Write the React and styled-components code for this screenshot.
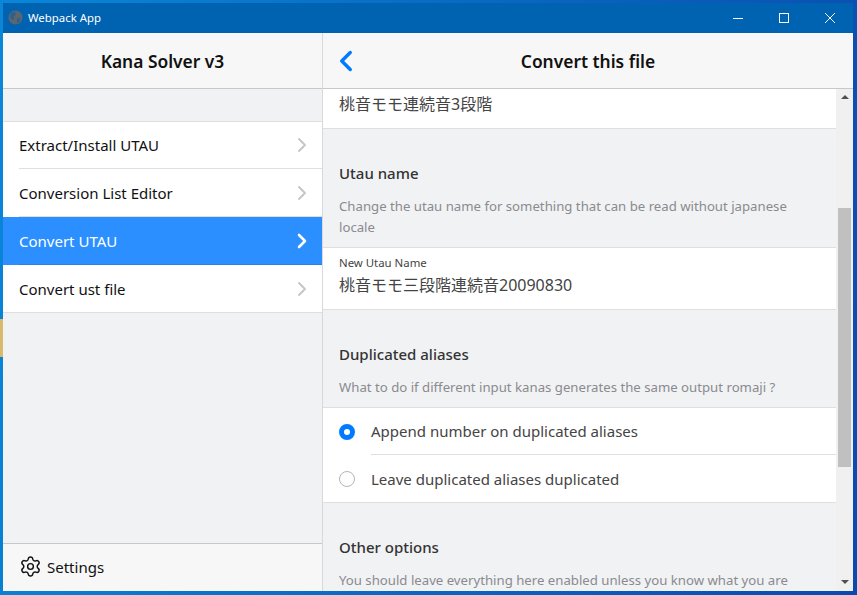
import React from 'react';
import styled, { createGlobalStyle } from 'styled-components';
import { ChevronLeft, ChevronRight, Settings } from 'lucide-react';

const GlobalStyle = createGlobalStyle`
  html, body {
    margin: 0;
    padding: 0;
    overflow: hidden;
  }
  * {
    box-sizing: border-box;
  }
`;

const menuItems = [
  { name: 'Extract/Install UTAU' },
  { name: 'Conversion List Editor' },
  { name: 'Convert UTAU', active: true },
  { name: 'Convert ust file' },
];

const App = () => {
  return (
    <>
      <GlobalStyle />
      <Desktop>
        <Wallpaper />
        <Window>
          <TitleBar>
            <svg width="15" height="15" viewBox="0 0 15 15">
              <circle cx="7.5" cy="7.5" r="7" fill="#5c6670" />
              <path d="M3 2.5 7 2 8 4.5 5.5 6.5 6.5 9 4.5 10 2 7ZM9 8l3.5.5L11 12.5 9 13Z" fill="#2f5f8c" />
            </svg>
            <AppName>Webpack App</AppName>
            <WindowControls>
              <ControlButton>
                <svg width="10" height="10" viewBox="0 0 10 10">
                  <path d="M0 5.5h10" stroke="#fff" fill="none" />
                </svg>
              </ControlButton>
              <ControlButton>
                <svg width="10" height="10" viewBox="0 0 10 10">
                  <rect x=".5" y=".5" width="9" height="9" stroke="#fff" fill="none" />
                </svg>
              </ControlButton>
              <ControlButton>
                <svg width="10" height="10" viewBox="0 0 10 10">
                  <path d="M0 0l10 10M10 0L0 10" stroke="#fff" fill="none" />
                </svg>
              </ControlButton>
            </WindowControls>
          </TitleBar>
          <Panes>
            <Sidebar>
              <NavBar>
                <NavTitle>Kana Solver v3</NavTitle>
              </NavBar>
              <SideList>
                {menuItems.map((item) => (
                  <SideRow key={item.name} $active={item.active}>
                    <SideInner $active={item.active}>
                      <span>{item.name}</span>
                      <ChevronRight size={24} strokeWidth={item.active ? 2.6 : 1.8} />
                    </SideInner>
                  </SideRow>
                ))}
              </SideList>
              <SideFooter>
                <Settings size={23} strokeWidth={1.5} />
                <span>Settings</span>
              </SideFooter>
            </Sidebar>
            <Main>
              <NavBar>
                <BackButton>
                  <ChevronLeft size={34} strokeWidth={2.4} />
                </BackButton>
                <NavTitle>Convert this file</NavTitle>
              </NavBar>
              <ScrollArea>
                <Content>
                  <TopRow>桃音モモ連続音3段階</TopRow>
                  <SectionHead>Utau name</SectionHead>
                  <SectionText>Change the utau name for something that can be read without japanese locale</SectionText>
                  <FieldRow>
                    <FieldLabel>New Utau Name</FieldLabel>
                    <FieldValue>桃音モモ三段階連続音20090830</FieldValue>
                  </FieldRow>
                  <SectionHead>Duplicated aliases</SectionHead>
                  <SectionText>What to do if different input kanas generates the same output romaji ?</SectionText>
                  <RadioList>
                    <RadioRow>
                      <Radio $checked />
                      <RadioLabel $divided>Append number on duplicated aliases</RadioLabel>
                    </RadioRow>
                    <RadioRow>
                      <Radio />
                      <RadioLabel>Leave duplicated aliases duplicated</RadioLabel>
                    </RadioRow>
                  </RadioList>
                  <SectionHead>Other options</SectionHead>
                  <SectionText>You should leave everything here enabled unless you know what you are</SectionText>
                </Content>
                <Scrollbar>
                  <ArrowUp />
                  <ScrollTrack>
                    <ScrollThumb />
                  </ScrollTrack>
                  <ArrowDown />
                </Scrollbar>
              </ScrollArea>
            </Main>
          </Panes>
        </Window>
      </Desktop>
    </>
  );
};

export default App;

const Desktop = styled.div`
  position: relative;
  width: 857px;
  height: 595px;
  padding: 3px 4px 4px 3px;
  background: linear-gradient(100deg, #0a86d8 0%, #0a6cc4 45%, #0a4aae 100%);
  font-family: 'Noto Sans', 'Noto Sans CJK JP', sans-serif;
  overflow: hidden;
`;

const Wallpaper = styled.div`
  position: absolute;
  left: 0;
  top: 319px;
  width: 3px;
  height: 38px;
  background: #d9b96a;
`;

const Window = styled.div`
  position: relative;
  display: flex;
  flex-direction: column;
  height: 100%;
  background: #f1f2f4;
`;

const TitleBar = styled.div`
  display: flex;
  align-items: center;
  flex: 0 0 30px;
  padding-left: 5px;
  background: #0063b1;
  color: #fff;

  > svg {
    margin-bottom: 1px;
  }
`;

const AppName = styled.span`
  margin: 0 0 2px 5px;
  font-size: 11.4px;
`;

const WindowControls = styled.div`
  display: flex;
  margin-left: auto;
`;

const ControlButton = styled.div`
  display: flex;
  align-items: center;
  justify-content: center;
  width: 46px;
  height: 30px;
  padding-bottom: 1px;
`;

const Panes = styled.div`
  display: flex;
  flex: 1;
  min-height: 0;
`;

const Sidebar = styled.div`
  display: flex;
  flex-direction: column;
  flex: 0 0 320px;
  border-right: 1px solid #d8d9db;
`;

const NavBar = styled.div`
  position: relative;
  display: flex;
  align-items: center;
  justify-content: center;
  flex: 0 0 56px;
  padding-top: 1px;
  background: #f7f7f7;
  border-bottom: 1px solid #c8c8c8;
`;

const NavTitle = styled.div`
  font-size: 17.4px;
  font-weight: 600;
  color: #111;
`;

const BackButton = styled.div`
  position: absolute;
  left: 6px;
  top: 11px;
  display: flex;
  color: #007aff;
`;

const SideList = styled.div`
  flex: 1;
  margin-top: 32px;
`;

const SideRow = styled.div`
  height: 48px;
  padding-left: 16px;
  background: ${(p) => (p.$active ? '#2b8fff' : '#fff')};
  color: ${(p) => (p.$active ? '#fff' : '#111')};
  font-size: 15px;

  &:first-child {
    box-shadow: inset 0 1px 0 #dfdfe1;
  }

  &:last-child {
    box-shadow: inset 0 -1px 0 #dfdfe1;
  }
`;

const SideInner = styled.div`
  display: flex;
  align-items: center;
  justify-content: space-between;
  height: 100%;
  padding-right: 8px;
  white-space: nowrap;
  border-bottom: 1px solid ${(p) => (p.$active ? '#2a7fe0' : '#dfdfe1')};

  svg {
    color: ${(p) => (p.$active ? '#fff' : '#c4c4c6')};
  }
`;

const SideFooter = styled.div`
  display: flex;
  align-items: center;
  gap: 5px;
  flex: 0 0 48px;
  padding: 0 0 2px 16px;
  background: #f7f7f7;
  border-top: 1px solid #c8c8c8;
  color: #111;
  font-size: 15px;
`;

const Main = styled.div`
  display: flex;
  flex-direction: column;
  flex: 1;
  min-width: 0;
`;

const ScrollArea = styled.div`
  display: flex;
  flex: 1;
  min-height: 0;
`;

const Content = styled.div`
  flex: 1;
  min-width: 0;
  overflow: hidden;
`;

const TopRow = styled.div`
  height: 40px;
  padding-left: 16px;
  background: #fff;
  border-bottom: 1px solid #dfdfe1;
  color: #444;
  font-size: 16px;
  line-height: 30px;
`;

const SectionHead = styled.div`
  padding: 32px 16px 0;
  font-size: 15px;
  font-weight: 500;
  line-height: 24px;
  color: #333;
`;

const SectionText = styled.div`
  padding: 11px 16px 9px;
  font-size: 13.2px;
  line-height: 21px;
  color: #8a8a8f;
`;

const FieldRow = styled.div`
  height: 63px;
  padding: 7px 16px 0;
  background: #fff;
  border-top: 1px solid #dfdfe1;
  border-bottom: 1px solid #dfdfe1;
`;

const FieldLabel = styled.div`
  font-size: 11.4px;
  line-height: 16px;
  color: #444;
`;

const FieldValue = styled.div`
  font-size: 16px;
  line-height: 28px;
  color: #444;
`;

const RadioList = styled.div`
  background: #fff;
  border-top: 1px solid #dfdfe1;
  border-bottom: 1px solid #dfdfe1;
`;

const RadioRow = styled.div`
  display: flex;
  align-items: center;
  height: 47px;
  padding-left: 16px;
`;

const Radio = styled.span`
  flex: 0 0 16px;
  height: 16px;
  border-radius: 50%;
  background: ${(p) => (p.$checked ? '#fff' : 'transparent')};
  border: ${(p) => (p.$checked ? '5px solid #007aff' : '1px solid #b6b6b6')};
`;

const RadioLabel = styled.div`
  display: flex;
  align-items: center;
  flex: 1;
  height: 100%;
  margin-left: 16px;
  font-size: 15px;
  color: #444;
  border-bottom: ${(p) => (p.$divided ? '1px solid #dfdfe1' : '0')};
`;

const Scrollbar = styled.div`
  display: flex;
  flex-direction: column;
  align-items: center;
  flex: 0 0 17px;
  background: #f0f0f0;
`;

const ArrowUp = styled.div`
  flex: 0 0 4px;
  width: 0;
  height: 0;
  margin-top: 6px;
  border-left: 4px solid transparent;
  border-right: 4px solid transparent;
  border-bottom: 4px solid #505050;
`;

const ArrowDown = styled.div`
  flex: 0 0 4px;
  width: 0;
  height: 0;
  margin-bottom: 7px;
  border-left: 4px solid transparent;
  border-right: 4px solid transparent;
  border-top: 4px solid #505050;
`;

const ScrollTrack = styled.div`
  flex: 1;
  width: 100%;
  padding: 109px 2px 0;
`;

const ScrollThumb = styled.div`
  height: 259px;
  background: #c0c0c0;
`;
